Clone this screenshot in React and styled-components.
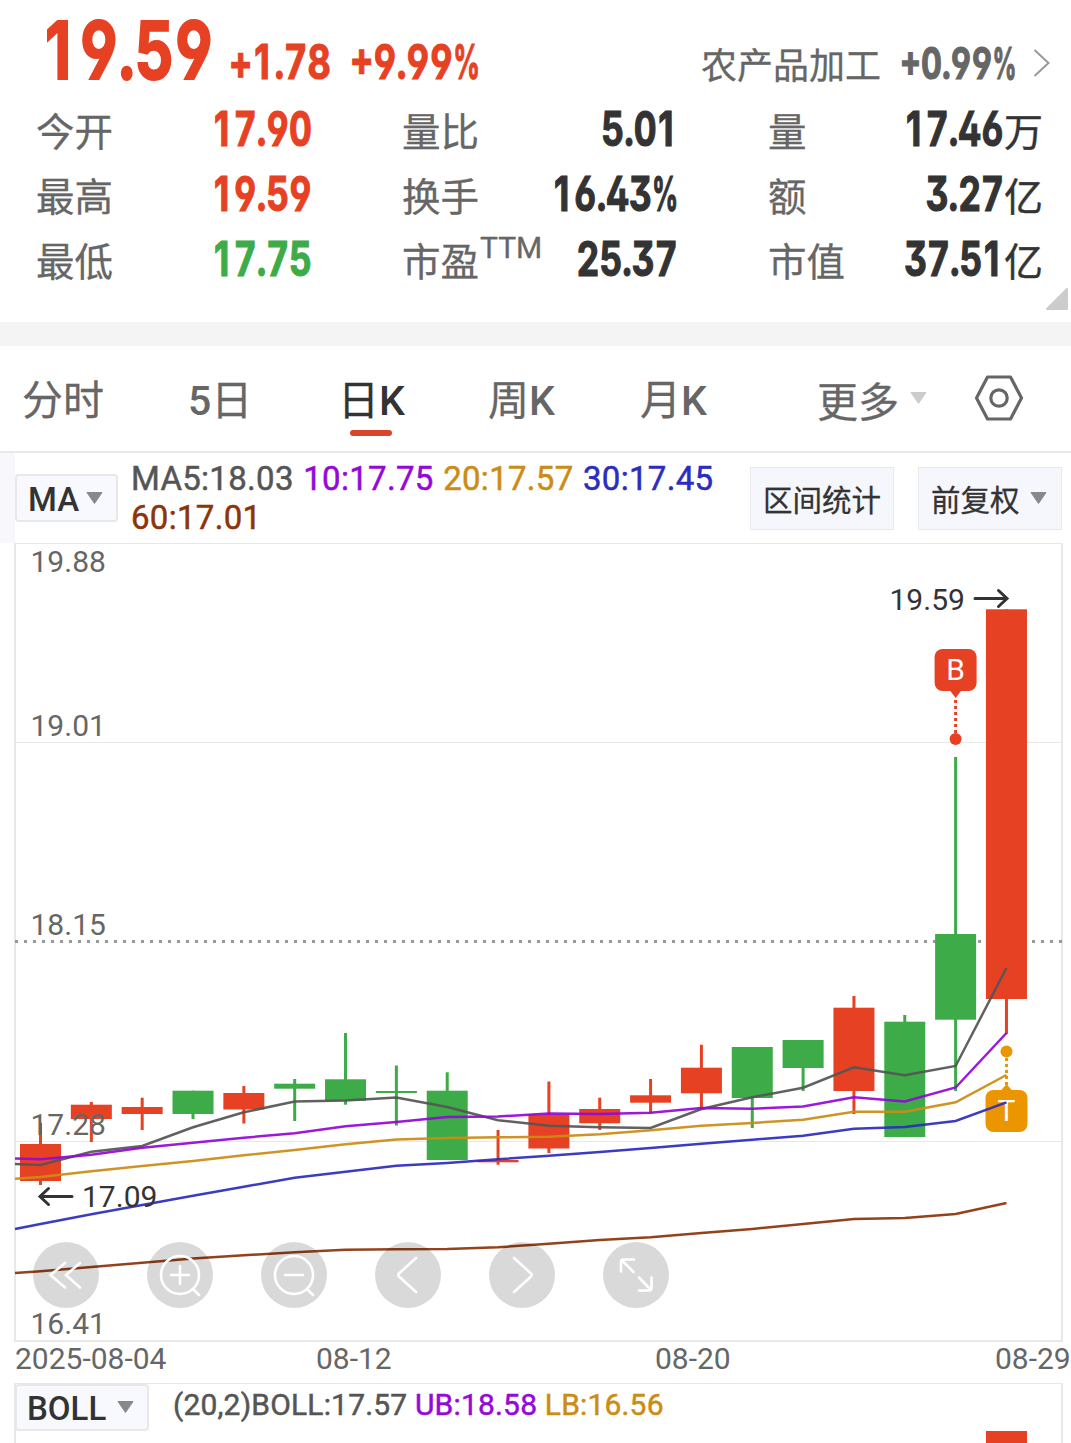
import { useState } from "react";
import styled, { createGlobalStyle } from "styled-components";

const RED = "#e74124";
const GREEN = "#3dab47";
const GREY = "#666666";
const DARK = "#333333";

const MA_COLORS = {
    ma5: "#555555",
    ma10: "#9408d8",
    ma20: "#cb8c14",
    ma30: "#2c2cc0",
    ma60: "#8c340a",
};

const stats = [
    { label: "今开", value: "17.90", color: RED },
    { label: "量比", value: "5.01" },
    { label: "量", value: "17.46", unit: "万" },
    { label: "最高", value: "19.59", color: RED },
    { label: "换手", value: "16.43", percent: true },
    { label: "额", value: "3.27", unit: "亿" },
    { label: "最低", value: "17.75", color: GREEN },
    { label: "市盈", sup: "TTM", value: "25.37" },
    { label: "市值", value: "37.51", unit: "亿" },
];

// top / bottom of the body, then high / low of the wick
const candles = [
    { up: true, body: [1144, 1181], wick: [1123, 1185] },
    { up: true, body: [1104.7, 1119], wick: [1102, 1142] },
    { up: true, body: [1107, 1114], wick: [1097.7, 1130] },
    { up: false, body: [1090.7, 1114], wick: [1090.7, 1119] },
    { up: true, body: [1093, 1109.5], wick: [1086, 1123.5] },
    { up: false, body: [1083.7, 1088.7], wick: [1079, 1121] },
    { up: false, body: [1079.3, 1100.7], wick: [1033, 1104.7] },
    { up: false, body: [1091, 1093], wick: [1065.5, 1125.5] },
    { up: false, body: [1090.7, 1160], wick: [1072.3, 1160] },
    { up: true, body: [1160, 1162.3], wick: [1130, 1164.7] },
    { up: true, body: [1114.5, 1148.5], wick: [1081.5, 1153] },
    { up: true, body: [1109, 1123.3], wick: [1097.7, 1130] },
    { up: true, body: [1095.3, 1102.7], wick: [1079, 1113.3] },
    { up: true, body: [1067.7, 1093.3], wick: [1044.7, 1108] },
    { up: false, body: [1047, 1098], wick: [1047, 1128] },
    { up: false, body: [1040, 1068], wick: [1040, 1091] },
    { up: true, body: [1007.7, 1091], wick: [996, 1114] },
    { up: false, body: [1021.7, 1137], wick: [1015, 1137] },
    { up: false, body: [934, 1019.7], wick: [757, 1091] },
    { up: true, body: [609.3, 999], wick: [609.3, 1034] },
];

const averages = [
    { id: "ma60", ys: [1273, 1271.3, 1267, 1262.7, 1258.5, 1255.3, 1252.3, 1249.8, 1249.3, 1249, 1247.3, 1243.7, 1240, 1237.3, 1233, 1229, 1224, 1219, 1218, 1214, 1203] },
    { id: "ma5", ys: [1164, 1165, 1151.7, 1146, 1127.3, 1112.3, 1101.5, 1100.5, 1097.5, 1107, 1120.3, 1125.7, 1127.3, 1128, 1109, 1097.3, 1087.7, 1067.3, 1075.3, 1066, 968] },
    { id: "ma10", ys: [1158.5, 1159.3, 1154.7, 1147.7, 1142.7, 1137.7, 1133.3, 1126.3, 1122, 1117, 1116.5, 1113.5, 1114, 1112.7, 1108, 1108.7, 1106.5, 1097.3, 1101.5, 1087.5, 1033] },
    { id: "ma20", ys: [1178.7, 1177, 1171.3, 1166, 1161, 1155.3, 1150, 1144.3, 1139.5, 1138, 1137.3, 1136.7, 1134.3, 1130.3, 1125.7, 1123, 1119.7, 1111.7, 1111.7, 1102.3, 1075] },
    { id: "ma30", ys: [1229, 1224, 1214.3, 1205, 1195.7, 1186.7, 1177.7, 1171.7, 1165.7, 1163, 1159.3, 1155.7, 1152, 1148, 1143.7, 1139.7, 1135.7, 1128.7, 1127, 1121, 1102.3] },
];

const tabs = [
    { id: "fs", cjk: "分时", width: 166 },
    { id: "5d", before: "5", cjk: "日", width: 150 },
    { id: "dk", cjk: "日", after: "K", width: 150 },
    { id: "wk", cjk: "周", after: "K", width: 152 },
    { id: "mk", cjk: "月", after: "K", width: 177 },
];

const candleX = (i) => 40.5 + i * 50.84;

function toPoints(ys) {
    return ys.map((y, i) => `${i === 0 ? 15 : candleX(i - 1)},${y}`).join(" ");
}

function Caret({ color = "#888888" }) {
    return (
        <svg width="17" height="12" viewBox="0 0 17 12">
            <path d="M1 0.5H16L8.5 11.5Z" fill={color} stroke={color} strokeLinejoin="round" />
        </svg>
    );
}

// condensed figures, where "1" takes as much room as any other digit
function Digits({ value, percent, right }) {
    return (
        <Squeeze $right={right}>
            {value.split(/(1)/).map((part, i) => (part === "1" ? <One key={i}>1</One> : part))}
            {percent && <Percent>%</Percent>}
        </Squeeze>
    );
}

function Quote() {
    return (
        <QuotePanel>
            <PriceRow>
                <Price><Digits value="19.59" /></Price>
                <Change $width={121}><Digits value="+1.78" /></Change>
                <Change $width={351}><Digits value="+9.99" percent /></Change>
                <Sector>农产品加工</Sector>
                <SectorChange><Digits value="+0.99" percent /></SectorChange>
                <svg width="18" height="30" viewBox="0 0 18 30" fill="none">
                    <path d="M1.5 2L15.5 15L1.5 28" stroke="#999" strokeWidth="2" />
                </svg>
            </PriceRow>
            <Stats>
                {stats.map((s) => (
                    <Stat key={s.label}>
                        <Label>{s.label}{s.sup && <Sup>{s.sup}</Sup>}</Label>
                        <Value $color={s.color}>
                            <Digits value={s.value} percent={s.percent} right />
                            {s.unit && <Unit>{s.unit}</Unit>}
                        </Value>
                    </Stat>
                ))}
            </Stats>
            <Corner width="24" height="24" viewBox="0 0 24 24">
                <path d="M22 2V22H2Z" fill="#cccccc" stroke="#cccccc" strokeWidth="2" strokeLinejoin="round" />
            </Corner>
        </QuotePanel>
    );
}

function Marker({ x, color, letter, down }) {
    const boxY = down ? 649 : 1090;
    return (
        <g fill={color}>
            <rect x={x - 21} y={boxY} width="42" height="42" rx="8" />
            {down
                ? <path d={`M${x - 6} 690L${x} 698L${x + 6} 690Z`} />
                : <path d={`M${x - 6} 1091L${x} 1084L${x + 6} 1091Z`} />}
            <line
                x1={x} x2={x}
                y1={down ? 700 : 1058} y2={down ? 733 : 1086}
                stroke={color} strokeWidth="3" strokeDasharray="3 3"
            />
            <circle cx={x} cy={down ? 739 : 1051.5} r="6" />
            <ChartText x={x} y={boxY + 31} textAnchor="middle" $color="#ffffff">{letter}</ChartText>
        </g>
    );
}

function Chart() {
    return (
        <ChartSvg width="1049" height="800" viewBox="14 543 1049 800">
            <path d="M15 742.5H1061M15 1141.5H1061" stroke="#e8e8e8" />
            <line x1="15" x2="1062" y1="941.5" y2="941.5" stroke="#999" strokeWidth="3" strokeDasharray="3 6" />

            {candles.map((c, i) => (
                <g key={i} fill={c.up ? RED : GREEN}>
                    <rect x={candleX(i) - 1.5} y={c.wick[0]} width="3" height={c.wick[1] - c.wick[0]} />
                    <rect x={candleX(i) - 20.5} y={c.body[0]} width="41" height={c.body[1] - c.body[0]} />
                </g>
            ))}

            <ChartText x="30.5" y="572">19.88</ChartText>
            <ChartText x="30.5" y="736">19.01</ChartText>
            <ChartText x="30.5" y="935">18.15</ChartText>
            <ChartText x="30.5" y="1135">17.28</ChartText>
            <ChartText x="30.5" y="1334">16.41</ChartText>

            <Marker x={955.6} color={RED} letter="B" down />
            <Marker x={1006.5} color="#eb9500" letter="T" />

            {averages.map((a) => (
                <polyline
                    key={a.id}
                    points={toPoints(a.ys)}
                    fill="none"
                    stroke={MA_COLORS[a.id]}
                    strokeWidth="2.5"
                    opacity="0.93"
                />
            ))}

            <ChartText x="889.5" y="610" $color={DARK}>19.59</ChartText>
            <path d="M975 598.5H1006.5M998.5 590.5L1007 598.5L998.5 606.5" fill="none" stroke={DARK} strokeWidth="3" strokeLinecap="round" />
            <ChartText x="82" y="1206.5" $color={DARK}>17.09</ChartText>
            <path d="M72 1196.5H41M48.5 1188.5L40 1196.5L48.5 1204.5" fill="none" stroke={DARK} strokeWidth="3" strokeLinecap="round" />
        </ChartSvg>
    );
}

const controls = [
    { id: "first", d: "M32 21L17.5 33L32 45.5M47 21L33 33L47 45.5" },
    { id: "zoomIn", d: "M52 33A19 19 0 1 1 14 33A19 19 0 1 1 52 33M46 47L52 53M24 33H42M33 24V42" },
    { id: "zoomOut", d: "M52 33A19 19 0 1 1 14 33A19 19 0 1 1 52 33M46 47L52 53M24 33H42" },
    { id: "prev", d: "M41 16L24 31.5Q22.5 33 24 34.5L41 50" },
    { id: "next", d: "M25 16L42 31.5Q43.5 33 42 34.5L25 50" },
    { id: "expand", d: "M30.5 30L19 18.5M18 29.5V20Q18 17.5 20.5 17.5H31M36 35.5L47.5 47.5M48.5 35.5V46Q48.5 48.5 46 48.5H36" },
];

export default function App() {
    const [active, setActive] = useState("dk");

    return (
        <Page>
            <Reset />
            <Quote />
            <Divider />
            <Tabs>
                {tabs.map((t) => (
                    <Tab key={t.id} $width={t.width} $active={active === t.id} onClick={() => setActive(t.id)}>
                        <span>
                            {t.before && <Latin>{t.before}</Latin>}
                            {t.cjk}
                            {t.after && <Latin>{t.after}</Latin>}
                        </span>
                    </Tab>
                ))}
                <More>更多<Caret color="#cccccc" /></More>
                <svg width="50" height="48" viewBox="0 0 50 48" fill="none" stroke={GREY} strokeWidth="3.2" strokeLinejoin="round">
                    <path d="M13.5 2H36.5L47.5 23L36.5 44H13.5L2.5 23Z" />
                    <circle cx="25" cy="23" r="8.2" />
                </svg>
            </Tabs>
            <Legend>
                <Gutter />
                <IndicatorButton $width={103}>MA<Caret /></IndicatorButton>
                <Averages>
                    <Item $color="#555555">MA5:18.03</Item>{" "}
                    <Item $color={MA_COLORS.ma10}>10:17.75</Item>{" "}
                    <Item $color={MA_COLORS.ma20}>20:17.57</Item>{" "}
                    <Item $color={MA_COLORS.ma30}>30:17.45</Item>{" "}
                    <Item $color={MA_COLORS.ma60}>60:17.01</Item>
                </Averages>
                <ToolButton>区间统计</ToolButton>
                <ToolButton>前复权<Caret /></ToolButton>
            </Legend>
            <ChartFrame>
                <Chart />
                <Controls>
                    {controls.map((c) => (
                        <RoundButton key={c.id}>
                            <svg width="66" height="66" viewBox="0 0 66 66" fill="none" stroke="#fff" strokeWidth="2.6" strokeLinecap="round">
                                <path d={c.d} />
                            </svg>
                        </RoundButton>
                    ))}
                </Controls>
            </ChartFrame>
            <Dates>
                <span>2025-08-04</span>
                <span>08-12</span>
                <span>08-20</span>
                <span>08-29</span>
            </Dates>
            <Boll>
                <IndicatorButton $width={134}>BOLL<Caret /></IndicatorButton>
                <BollValues>
                    <Item $color="#555555">(20,2)BOLL:17.57</Item>{" "}
                    <Item $color={MA_COLORS.ma10}>UB:18.58</Item>{" "}
                    <Item $color={MA_COLORS.ma20}>LB:16.56</Item>
                </BollValues>
                <BollBar />
            </Boll>
        </Page>
    );
}

const Reset = createGlobalStyle`
    * {
        box-sizing: border-box;
    }

    body {
        margin: 0;
        background: #ffffff;
    }

    svg {
        display: block;
        flex: none;
    }
`;

const Page = styled.div`
    width: 1071px;
    height: 1443px;
    overflow: hidden;
    background-color: #ffffff;
    color: ${GREY};
    font-family: Roboto, "Noto Sans CJK SC", sans-serif;
    white-space: nowrap;
`;

const QuotePanel = styled.div`
    position: relative;
    height: 322px;
`;

const PriceRow = styled.div`
    display: flex;
    align-items: baseline;
    height: 96px;
    padding-left: 42px;

    svg {
        align-self: center;
        margin-top: 30px;
    }
`;

const Figure = styled.div`
    font-family: Inter, sans-serif;
    font-weight: 700;
    font-kerning: none;
    font-feature-settings: "tnum", "cv03", "cv04", "ss01";
    -webkit-text-stroke: 1.2px currentColor;
`;

const Squeeze = styled.span`
    display: inline-block;
    transform: scaleX(0.745);
    transform-origin: ${(p) => (p.$right ? "right" : "left")};
`;

const One = styled.span`
    padding-left: 0.05em;
    letter-spacing: 0.13em;
    font-feature-settings: "tnum" 0;
`;

const Percent = styled.span`
    display: inline-block;
    transform: scaleX(0.73);
    transform-origin: left;
    margin-right: -0.27em;
`;

const Price = styled(Figure)`
    width: 187px;
    color: ${RED};
    font-size: 79.5px;
    line-height: 100px;
    -webkit-text-stroke-width: 2px;

    ${Squeeze} {
        transform: scaleX(0.765);
    }
`;

const Change = styled(Figure)`
    width: ${(p) => p.$width}px;
    color: ${RED};
    font-size: 47.5px;

    ${Squeeze} {
        transform: scaleX(0.76);
    }
`;

const Sector = styled.div`
    width: 199px;
    font-size: 36px;
    -webkit-text-stroke: 0.3px currentColor;
`;

const SectorChange = styled(Figure)`
    width: 133px;
    font-size: 43.5px;
`;

const Stats = styled.div`
    display: grid;
    grid-template-columns: 276px 276px 275px;
    column-gap: 90px;
    padding-left: 36px;
`;

const Stat = styled.div`
    display: flex;
    align-items: baseline;
    justify-content: space-between;
    height: 65px;
    line-height: 65px;
`;

const Label = styled.div`
    font-size: 38.5px;
    -webkit-text-stroke: 0.3px currentColor;
`;

const Sup = styled.sup`
    margin-left: 1px;
    font-size: 30px;
    line-height: 0;
    vertical-align: 18px;
`;

const Value = styled(Figure)`
    display: flex;
    align-items: baseline;
    justify-content: flex-end;
    width: 120px;
    color: ${(p) => p.$color || DARK};
    font-size: 47.5px;
`;

const Unit = styled.span`
    font-family: "Noto Sans CJK SC", sans-serif;
    font-size: 39px;
    font-weight: 400;
    -webkit-text-stroke: 0.4px currentColor;
`;

const Corner = styled.svg`
    position: absolute;
    right: 2px;
    bottom: 11px;
`;

const Divider = styled.div`
    height: 24px;
    background-color: #f4f4f4;
`;

const Tabs = styled.div`
    display: flex;
    align-items: center;
    height: 107px;
    padding-left: 22px;
    border-bottom: 2px solid #e9e9e9;
    font-size: 41px;
    -webkit-text-stroke: 0.3px currentColor;
`;

const Tab = styled.div`
    display: flex;
    width: ${(p) => p.$width}px;
    height: 105px;
    line-height: 110px;
    color: ${(p) => (p.$active ? DARK : GREY)};
    cursor: pointer;

    span {
        position: relative;
    }

    > span::after {
        content: "";
        display: ${(p) => (p.$active ? "block" : "none")};
        position: absolute;
        left: 50%;
        bottom: 15px;
        width: 42px;
        height: 6px;
        margin-left: -21px;
        border-radius: 3px;
        background-color: #d9452b;
    }
`;

const Latin = styled.span`
    font-weight: 500;
    -webkit-text-stroke: 0;
`;

const More = styled.div`
    display: flex;
    align-items: center;
    gap: 11px;
    width: 157px;

    svg {
        margin-top: -1px;
    }
`;

const Legend = styled.div`
    display: flex;
    height: 90px;
`;

const Gutter = styled.div`
    width: 15px;
    background-color: #f8f8fc;
`;

const IndicatorButton = styled.div`
    display: flex;
    align-items: center;
    justify-content: space-between;
    width: ${(p) => p.$width}px;
    height: 48px;
    margin-top: 21px;
    padding: 3px 13px 0 11px;
    border: 2px solid #e8e8e8;
    border-radius: 4px;
    background-color: #f8f9ff;
    color: ${DARK};
    font-size: 33px;
    font-weight: 500;

    svg {
        margin-top: -4px;
    }
`;

const Averages = styled.div`
    width: 632px;
    padding: 6px 0 0 13px;
    font-size: 33px;
    line-height: 39px;
    letter-spacing: 0.3px;
    word-spacing: 1px;
    white-space: normal;
`;

const Item = styled.span`
    color: ${(p) => p.$color};
    -webkit-text-stroke: 0.5px currentColor;
    white-space: nowrap;
`;

const ToolButton = styled.div`
    display: flex;
    align-items: center;
    gap: 11px;
    width: 144px;
    height: 63px;
    margin: 14px 24px 0 0;
    padding: 0 0 2px 12px;
    border: 1px solid #e8e8ee;
    background-color: #f6f7fd;
    color: ${DARK};
    font-size: 29.5px;
    -webkit-text-stroke: 0.3px currentColor;

    &:last-child {
        gap: 10px;
        margin-right: 0;
    }
`;

const ChartFrame = styled.div`
    position: relative;
    width: 1049px;
    height: 799px;
    margin-left: 14px;
    border: 2px solid #e8e8e8;
    border-top-width: 1px;
`;

const ChartSvg = styled.svg`
    margin: -1px 0 0 -2px;
`;

const ChartText = styled.text`
    font-size: 30px;
    fill: ${(p) => p.$color || GREY};
`;

const Controls = styled.div`
    position: absolute;
    left: 17px;
    bottom: 32px;
    display: flex;
    gap: 48px;
`;

const RoundButton = styled.div`
    width: 66px;
    height: 66px;
    border-radius: 50%;
    background-color: rgba(0, 0, 0, 0.15);
`;

const Dates = styled.div`
    display: grid;
    grid-template-columns: 301px 339px 340px auto;
    height: 41px;
    padding-left: 15px;
    font-size: 30px;
    line-height: 34px;
`;

const Boll = styled.div`
    display: flex;
    width: 1049px;
    height: 60px;
    margin-left: 14px;
    border: 2px solid #e8e8e8;
    border-top-width: 1px;
    border-bottom: 0;

    ${IndicatorButton} {
        height: 47px;
        margin: 0 0 0 -1px;
        padding: 1px 13px 0 10px;
    }

    svg {
        margin-top: -3px;
    }
`;

const BollValues = styled.div`
    width: 837px;
    padding-left: 24px;
    font-size: 30px;
    line-height: 42px;
    letter-spacing: 0.18px;
`;

const BollBar = styled.div`
    align-self: flex-end;
    width: 41px;
    height: 12px;
    background-color: ${RED};
`;
